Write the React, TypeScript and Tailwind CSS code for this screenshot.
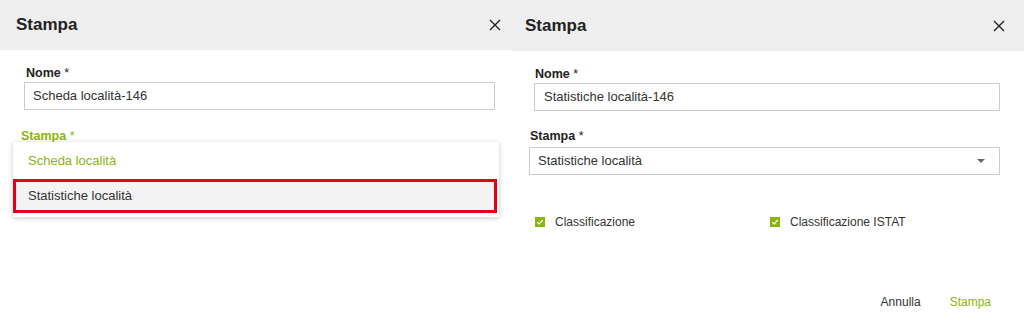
import * as React from "react";

const GREEN = "text-[#8cb40e]";

function CloseIcon() {
  return (
    <svg width="12" height="12" viewBox="0 0 12 12" className="shrink-0">
      <path d="M1 1 L11 11 M11 1 L1 11" stroke="#222" strokeWidth="1.4" fill="none" />
    </svg>
  );
}

function Check() {
  return (
    <span className="flex h-[10px] w-[10px] shrink-0 items-center justify-center bg-[#8cb40e]">
      <svg width="8" height="8" viewBox="0 0 8 8">
        <path d="M1.2 4.2 L3.2 6 L6.8 2" stroke="#fff" strokeWidth="1.2" fill="none" />
      </svg>
    </span>
  );
}

function Header({ padLeft, padRight, height }: { padLeft: string; padRight: string; height: string }) {
  return (
    <div className={`flex ${height} shrink-0 items-center justify-between bg-[#eeeeee] ${padLeft} ${padRight}`}>
      <span className="text-[17px] font-bold text-[#222]">Stampa</span>
      <CloseIcon />
    </div>
  );
}

function Label({ children, className = "" }: { children: React.ReactNode; className?: string }) {
  return (
    <div className={"text-[12.5px] font-bold leading-[15px] " + className}>
      {children} <span className="font-normal">*</span>
    </div>
  );
}

function LeftPanel() {
  return (
    <section className="flex h-full w-[512px] shrink-0 flex-col bg-white">
      <Header padLeft="pl-[16px]" padRight="pr-[11px]" height="h-[50px]" />
      <div className="flex flex-col pl-[24px] pr-[17px] pt-[16px]">
        <Label className="ml-[2px] text-[#222]">Nome</Label>
        <div className="mt-[1px] flex h-[28px] items-center border border-[#cccccc] px-[8px] text-[13px] text-[#333]">
          Scheda località-146
        </div>
        <Label className="-ml-[3px] mt-[19px] text-[#8cb40e]">Stampa</Label>
        <div className="relative">
          {/* open dropdown menu over the select */}
          <div className="absolute left-[-11px] right-[-4px] top-[-2px] z-10 bg-white shadow-[0_1px_5px_rgba(0,0,0,0.22)]">
            <div className={`flex h-[37px] items-center pl-[15px] text-[13px] ${GREEN}`}>Scheda località</div>
            <div className="mr-[2px] flex h-[34px] items-center border-[3px] border-[#e2001a] bg-[#f4f4f4] pl-[12px] text-[13px] text-[#333]">
              Statistiche località
            </div>
            <div className="h-[4px]" />
          </div>
        </div>
      </div>
    </section>
  );
}

function RightPanel() {
  return (
    <section className="flex h-full w-[512px] shrink-0 flex-col bg-white">
      <Header padLeft="pl-[13px]" padRight="pr-[19px]" height="h-[51px]" />
      <div className="flex flex-1 flex-col pr-[24px] pt-[16px]">
        <Label className="ml-[23px] text-[#222]">Nome</Label>
        <div className="ml-[22px] mt-[1px] flex h-[28px] items-center border border-[#cccccc] px-[9px] text-[13px] text-[#333]">
          Statistiche località-146
        </div>
        <Label className="ml-[18px] mt-[18px] text-[#222]">Stampa</Label>
        <div className="ml-[17px] mt-[3px] flex h-[28px] items-center justify-between border border-[#cccccc] pl-[8px] pr-[14px] text-[13px] text-[#333]">
          <span>Statistiche località</span>
          <svg width="8" height="4" viewBox="0 0 8 4">
            <path d="M0 0 L8 0 L4 4 Z" fill="#666" />
          </svg>
        </div>
        <div className="ml-[23px] mt-[38px] grid grid-cols-[235px_1fr] text-[12px] text-[#333]">
          <div className="flex items-center gap-[10px]">
            <Check />
            <span>Classificazione</span>
          </div>
          <div className="flex items-center gap-[10px]">
            <Check />
            <span>Classificazione ISTAT</span>
          </div>
        </div>
        <div className="mt-[62px] flex justify-end gap-[29px] pr-[9px] text-[12px]">
          <span className="text-[#333]">Annulla</span>
          <span className={GREEN}>Stampa</span>
        </div>
      </div>
    </section>
  );
}

export default function App() {
  return (
    <div className="flex h-[328px] w-[1024px] overflow-hidden bg-white font-['Liberation_Sans',Arial,sans-serif]">
      <LeftPanel />
      <RightPanel />
    </div>
  );
}
